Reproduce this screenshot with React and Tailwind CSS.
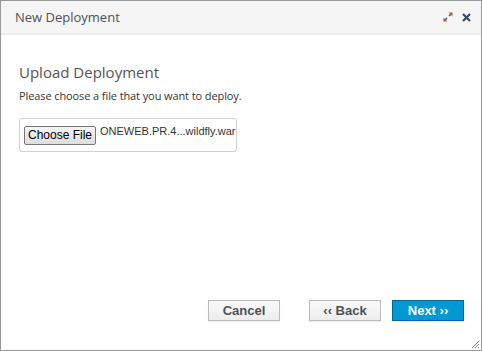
import React from "react";

export default function App() {
  return (
    <div className="w-[482px] h-[351px] bg-white border border-[#999] flex flex-col relative" style={{ fontFamily: '"Open Sans", sans-serif' }}>
      <div className="h-[34px] bg-[#f5f5f5] border-b-2 border-[#ececec] flex items-center pl-[14px] pr-[10px] shrink-0">
        <div className="text-[13px] text-[#4d5258] flex-1 pt-[1px]">New Deployment</div>
        <svg width="10" height="10" viewBox="0 0 10 10" className="mr-[9px]">
          <path d="M1 9 L4 6" stroke="#2a5a8a" strokeWidth="1.6" />
          <path d="M0.5 5.5 L0.5 9.5 L4.5 9.5 Z" fill="#c0603a" />
          <path d="M6 4 L9 1" stroke="#2a5a8a" strokeWidth="1.6" />
          <path d="M5.5 0.5 L9.5 0.5 L9.5 4.5 Z" fill="#c0603a" />
        </svg>
        <svg width="9" height="9" viewBox="0 0 9 9">
          <path d="M1 1 L8 8 M8 1 L1 8" stroke="#3a4a5e" strokeWidth="2.2" />
        </svg>
      </div>
      <div className="flex-1 flex flex-col px-[18px]">
        <div className="mt-[27px] text-[15px] leading-[20px] text-[#545454]">Upload Deployment</div>
        <div className="mt-[6px] text-[11px] leading-[16px] text-[#363636] tracking-[-0.1px]">Please choose a file that you want to deploy.</div>
        <div className="mt-[14px] w-[218px] h-[34px] border border-[#d1d1d1] rounded-[3px] flex items-start pl-[4px] pt-[7px]" style={{ fontFamily: '"Liberation Sans", Arial, sans-serif' }}>
          <div className="w-[72px] h-[19px] shrink-0 whitespace-nowrap text-center border border-[#767676] rounded-[2px] bg-gradient-to-b from-[#f6f6f6] to-[#dddddd] text-[12px] leading-[17px] text-black">Choose File</div>
          <div className="ml-[4px] -mt-[2px] whitespace-nowrap text-[11px] leading-[14px] text-[#333]">ONEWEB.PR.4...wildfly.war</div>
        </div>
        <div className="flex-1" />
        <div className="flex justify-end items-center mb-[29px] mr-[-1px]" style={{ fontFamily: '"Liberation Sans", Arial, sans-serif' }}>
          <button className="w-[72px] h-[21px] border border-[#bbb] bg-gradient-to-b from-[#fafafa] to-[#ededed] text-[13px] font-bold text-[#4d5258] leading-[19px] shadow-[0_1px_1px_rgba(0,0,0,0.06)]">Cancel</button>
          <button className="ml-[29px] w-[72px] h-[21px] border border-[#bbb] bg-gradient-to-b from-[#fafafa] to-[#ededed] text-[13px] font-bold text-[#4d5258] leading-[19px] shadow-[0_1px_1px_rgba(0,0,0,0.06)]">‹‹ Back</button>
          <button className="ml-[11px] w-[72px] h-[21px] border border-[#00659c] bg-[#0099d3] text-[13px] font-bold text-white leading-[19px]">Next ››</button>
        </div>
      </div>
      <svg width="10" height="10" viewBox="0 0 10 10" className="absolute right-[1px] bottom-[1px]">
        <path d="M9 2 L2 9 M9 5 L5 9 M9 8 L8 9" stroke="#888" strokeWidth="1" />
      </svg>
    </div>
  );
}
